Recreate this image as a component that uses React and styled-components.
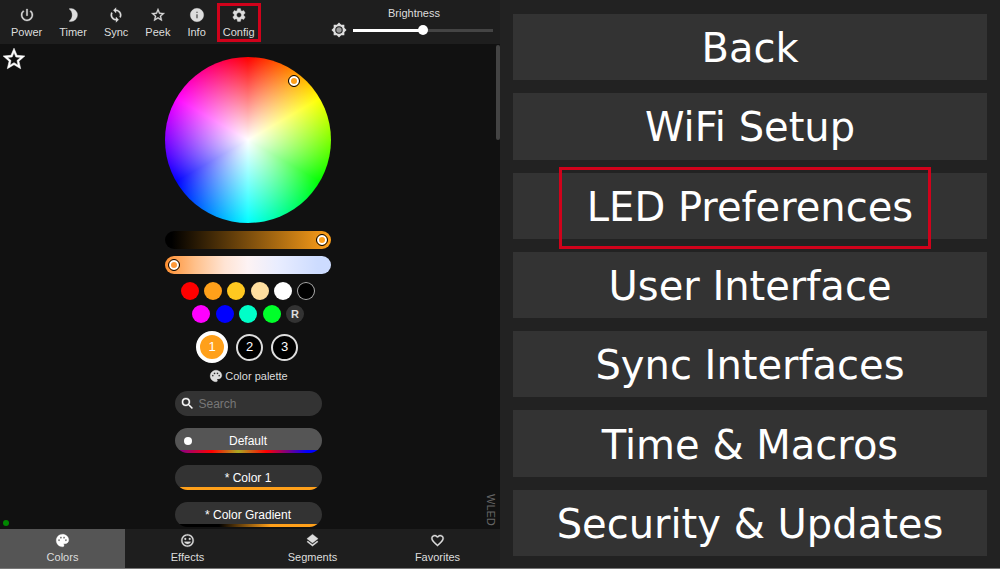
import React, { useState } from "react";
import styled, { createGlobalStyle } from "styled-components";
import {
  MdPowerSettingsNew,
  MdSync,
  MdStarBorder,
  MdInfo,
  MdSettings,
  MdPalette,
  MdSearch,
  MdTagFaces,
  MdLayers,
  MdFavoriteBorder,
} from "react-icons/md";

const GlobalStyle = createGlobalStyle`
  * { box-sizing: border-box; }
  body { margin: 0; background: #222; }
  button, input { font: inherit; color: inherit; margin: 0; }
  button { border: 0; padding: 0; background: none; cursor: pointer; }
  svg path[fill="none"] { stroke: none; }
`;

const Page = styled.div`
  display: grid;
  grid-template-columns: 1fr 1fr;
  grid-template-rows: minmax(0, 1fr);
  height: 100vh;
  border-bottom: 1px solid #777;
`;

const Controller = styled.main`
  display: flex;
  flex-direction: column;
  background: #111;
  color: #ddd;
  font: 11px/14px "Liberation Sans", Arial, sans-serif;
`;

const TopBar = styled.header`
  display: flex;
  justify-content: space-between;
  height: 44px;
  flex: none;
  background: #1e1e1e;
`;

const Tools = styled.nav`
  display: flex;
  gap: 1px;
  padding-left: 3px;
`;

const ToolButton = styled.button`
  position: relative;
  display: flex;
  flex-direction: column;
  align-items: center;
  gap: 2px;
  padding: 7px 8px 0;
  svg { width: 16px; height: 16px; stroke: currentColor; stroke-width: 0.5px; }
`;

const ToolMarker = styled.span`
  position: absolute;
  inset: 3px 2px 2px;
  border: 3px solid #d0021b;
`;

const BrightnessBox = styled.label`
  display: grid;
  grid-template-columns: 16px 140px;
  gap: 1px 6px;
  align-items: center;
  align-content: start;
  padding: 5px 7px 0 0;
  svg { width: 16px; height: 16px; }
`;

const BrightnessLabel = styled.span`
  grid-column: 2;
  padding-right: 18px;
  text-align: center;
  line-height: 16px;
`;

const BrightnessRange = styled.input`
  appearance: none;
  width: 100%;
  height: 16px;
  background: linear-gradient(to right, #fff 50%, #444 50%) center / 100% 3px no-repeat;
  &::-webkit-slider-thumb {
    appearance: none;
    width: 10px;
    height: 10px;
    border-radius: 50%;
    background: #fff;
  }
`;

const Body = styled.div`
  position: relative;
  display: flex;
  flex: 1;
  min-height: 0;
`;

const Scroller = styled.section`
  flex: 1;
  display: flex;
  flex-direction: column;
  align-items: center;
  padding-top: 13px;
  overflow: hidden;
`;

const ScrollThumb = styled.div`
  width: 4px;
  height: 95px;
  margin-top: 1px;
  border-radius: 2px;
  background: #444;
`;

const FavoriteStar = styled.button`
  position: absolute;
  top: 2px;
  left: 1px;
  color: #fff;
  line-height: 0;
  svg { width: 26px; height: 26px; stroke: currentColor; stroke-width: 0.5px; }
`;

const StatusDot = styled.span`
  position: absolute;
  left: 3px;
  bottom: 3px;
  width: 6px;
  height: 6px;
  border-radius: 50%;
  background: #080;
`;

const Brand = styled.span`
  position: absolute;
  right: 2px;
  bottom: 3px;
  writing-mode: vertical-rl;
  color: #666;
`;

const Wheel = styled.div`
  position: relative;
  flex: none;
  width: 166px;
  height: 166px;
  border-radius: 50%;
  background:
    radial-gradient(closest-side, #fff, transparent),
    conic-gradient(red, yellow, lime, aqua, blue, magenta, red);
`;

const Handle = styled.span`
  position: absolute;
  left: ${(p) => p.$x}px;
  top: ${(p) => p.$y}px;
  width: 12px;
  height: 12px;
  border: 1px solid #000;
  border-radius: 50%;
  background: ${(p) => p.$color};
  box-shadow: inset 0 0 0 2px #fff;
`;

const Strip = styled.div`
  position: relative;
  flex: none;
  width: 166px;
  height: 18px;
  margin-top: ${(p) => p.$gap}px;
  border-radius: 9px;
  background: linear-gradient(to right, ${(p) => p.$stops});
`;

const SwatchRow = styled.div`
  display: flex;
  justify-content: space-between;
  flex: none;
  width: ${(p) => p.$width}px;
  margin-top: ${(p) => p.$gap}px;
`;

const Swatch = styled.button`
  width: 18px;
  height: 18px;
  border-radius: 50%;
  background: ${(p) => p.$color};
  box-shadow: ${(p) => (p.$outlined ? "inset 0 0 0 1px #aaa" : "none")};
  font-size: 11px;
  font-weight: bold;
  line-height: 18px;
`;

const Slots = styled.div`
  display: flex;
  align-items: center;
  flex: none;
  gap: 8px;
  margin-top: 8px;
  padding-right: 2px;
`;

const Slot = styled.button`
  width: ${(p) => (p.$active ? 32 : 27)}px;
  height: ${(p) => (p.$active ? 32 : 27)}px;
  border: ${(p) => (p.$active ? "4px solid #fff" : "2px solid #ddd")};
  border-radius: 50%;
  background: ${(p) => (p.$active ? "#ffa01a" : "#000")};
  color: #fff;
  font-size: 13px;
`;

const PaletteTitle = styled.h2`
  display: flex;
  align-items: center;
  flex: none;
  gap: 2px;
  margin: 6px 0 8px;
  padding-left: 1px;
  font: inherit;
  svg { width: 14px; height: 14px; stroke: currentColor; stroke-width: 0.5px; }
`;

const SearchBox = styled.label`
  display: flex;
  align-items: center;
  flex: none;
  gap: 4px;
  width: 147px;
  height: 25px;
  padding-left: 5px;
  border-radius: 13px;
  background: #333;
  color: #fff;
  svg { flex: none; width: 15px; height: 15px; stroke: currentColor; stroke-width: 0.5px; }
`;

const SearchInput = styled.input`
  flex: 1;
  min-width: 0;
  padding: 0;
  border: 0;
  outline: 0;
  background: none;
  font-size: 12px;
  &::placeholder { color: #777; }
`;

const PaletteOption = styled.label`
  position: relative;
  display: flex;
  align-items: center;
  justify-content: center;
  flex: none;
  width: 147px;
  height: 25px;
  margin-top: 12px;
  border-radius: 13px;
  overflow: hidden;
  background:
    linear-gradient(to right, ${(p) => p.$stops}) bottom / 100% 3px no-repeat
    ${(p) => (p.$active ? "#555" : "#333")};
  color: #fff;
  font-size: 12px;
  cursor: pointer;
`;

const PaletteRadio = styled.input`
  appearance: none;
  position: absolute;
  left: 9px;
  width: 8px;
  height: 8px;
  border-radius: 50%;
  &:checked { background: #fff; }
`;

const Tabs = styled.nav`
  display: grid;
  grid-template-columns: repeat(4, 1fr);
  flex: none;
  height: 39px;
  background: #1e1e1e;
`;

const Tab = styled.button`
  display: flex;
  flex-direction: column;
  align-items: center;
  gap: 2px;
  padding-top: 4px;
  background: ${(p) => (p.$active ? "#555" : "transparent")};
  svg {
    width: 15px;
    height: 15px;
    color: ${(p) => (p.$active ? "#fff" : "inherit")};
    stroke: currentColor;
    stroke-width: 0.5px;
  }
`;

const Menu = styled.nav`
  display: grid;
  grid-auto-rows: 1fr;
  gap: 13px;
  padding: 14px 13px 12px;
  background: #222;
`;

const MenuButton = styled.button`
  position: relative;
  padding-top: 2px;
  background: #333;
  color: #fff;
  font: 40px/50px "DejaVu Sans", Verdana, sans-serif;
`;

const MenuMarker = styled.span`
  position: absolute;
  inset: -6px 56px -10px 46px;
  border: 3px solid #d0021b;
`;

const MoonIcon = () => (
  <svg viewBox="0 0 24 24" fill="currentColor">
    <path d="M6 2.8A9.6 9.6 0 0 1 9 2.3a9.7 9.7 0 0 1 0 19.4 9.6 9.6 0 0 1-3-.5c3-2 4.8-5.2 4.8-9.2S9 4.8 6 2.8z" />
  </svg>
);

const SunIcon = () => (
  <svg viewBox="0 0 24 24">
    <path
      fill="#ddd"
      d="M20 8.7V4h-4.7L12 .7 8.7 4H4v4.7L.7 12 4 15.3V20h4.7l3.3 3.3 3.3-3.3H20v-4.7l3.3-3.3z"
    />
    <circle cx="12" cy="12" r="4.8" fill="#999" stroke="#1e1e1e" strokeWidth="1.6" />
  </svg>
);

const tools = [
  ["Power", MdPowerSettingsNew],
  ["Timer", MoonIcon],
  ["Sync", MdSync],
  ["Peek", MdStarBorder],
  ["Info", MdInfo],
  ["Config", MdSettings],
];

const palettes = [
  ["Default", "#808 3%, red 25%, #aa2 43%, red 62%, #00f 90%"],
  ["* Color 1", "#ffa01a, #ffa01a"],
  ["* Color Gradient", "#000 30%, #ffa01a 65%"],
];

const tabs = [
  ["Colors", MdPalette],
  ["Effects", MdTagFaces],
  ["Segments", MdLayers],
  ["Favorites", MdFavoriteBorder],
];

const menu = [
  "Back",
  "WiFi Setup",
  "LED Preferences",
  "User Interface",
  "Sync Interfaces",
  "Time & Macros",
  "Security & Updates",
];

export default function App() {
  const [slot, setSlot] = useState(1);
  const [palette, setPalette] = useState("Default");
  const [tab, setTab] = useState("Colors");

  return (
    <Page>
      <GlobalStyle />
      <Controller>
        <TopBar>
          <Tools>
            {tools.map(([name, Icon]) => (
              <ToolButton key={name}>
                <Icon />
                {name}
                {name === "Config" && <ToolMarker />}
              </ToolButton>
            ))}
          </Tools>
          <BrightnessBox>
            <BrightnessLabel>Brightness</BrightnessLabel>
            <SunIcon />
            <BrightnessRange type="range" min="0" max="100" defaultValue="50" />
          </BrightnessBox>
        </TopBar>

        <Body>
          <Scroller>
            <Wheel>
              <Handle $x={123} $y={18} $color="#ffa01a" />
            </Wheel>
            <Strip $gap={8} $stops="#000 4%, #ffa01a">
              <Handle $x={151} $y={3} $color="#ffa01a" />
            </Strip>
            <Strip $gap={7} $stops="#ff8f30, #ffc08a 18%, #ffe4d4 36%, #fdf3f4 50%, #e9edff 68%, #cddcff 92%">
              <Handle $x={3} $y={3} $color="#ff9838" />
            </Strip>
            <SwatchRow $width={135} $gap={8}>
              {["#ff0000", "#ffa01a", "#ffc820", "#ffdfa0", "#ffffff", "#000000"].map((c) => (
                <Swatch key={c} $color={c} $outlined={c === "#000000"} aria-label={c} />
              ))}
            </SwatchRow>
            <SwatchRow $width={112} $gap={5}>
              {["#ff00ff", "#0000ff", "#00ffc8", "#00ff2a"].map((c) => (
                <Swatch key={c} $color={c} aria-label={c} />
              ))}
              <Swatch $color="#333">R</Swatch>
            </SwatchRow>
            <Slots>
              {[1, 2, 3].map((n) => (
                <Slot key={n} $active={slot === n} onClick={() => setSlot(n)}>
                  {n}
                </Slot>
              ))}
            </Slots>
            <PaletteTitle>
              <MdPalette />
              Color palette
            </PaletteTitle>
            <SearchBox>
              <MdSearch />
              <SearchInput placeholder="Search" aria-label="Search" />
            </SearchBox>
            {palettes.map(([name, stops]) => (
              <PaletteOption key={name} $stops={stops} $active={palette === name}>
                <PaletteRadio
                  type="radio"
                  name="palette"
                  checked={palette === name}
                  onChange={() => setPalette(name)}
                />
                {name}
              </PaletteOption>
            ))}
          </Scroller>
          <ScrollThumb />
          <FavoriteStar aria-label="Favorite">
            <MdStarBorder />
          </FavoriteStar>
          <StatusDot />
          <Brand>WLED</Brand>
        </Body>

        <Tabs>
          {tabs.map(([name, Icon]) => (
            <Tab key={name} $active={tab === name} onClick={() => setTab(name)}>
              <Icon />
              {name}
            </Tab>
          ))}
        </Tabs>
      </Controller>

      <Menu>
        {menu.map((name) => (
          <MenuButton key={name}>
            {name}
            {name === "LED Preferences" && <MenuMarker />}
          </MenuButton>
        ))}
      </Menu>
    </Page>
  );
}
